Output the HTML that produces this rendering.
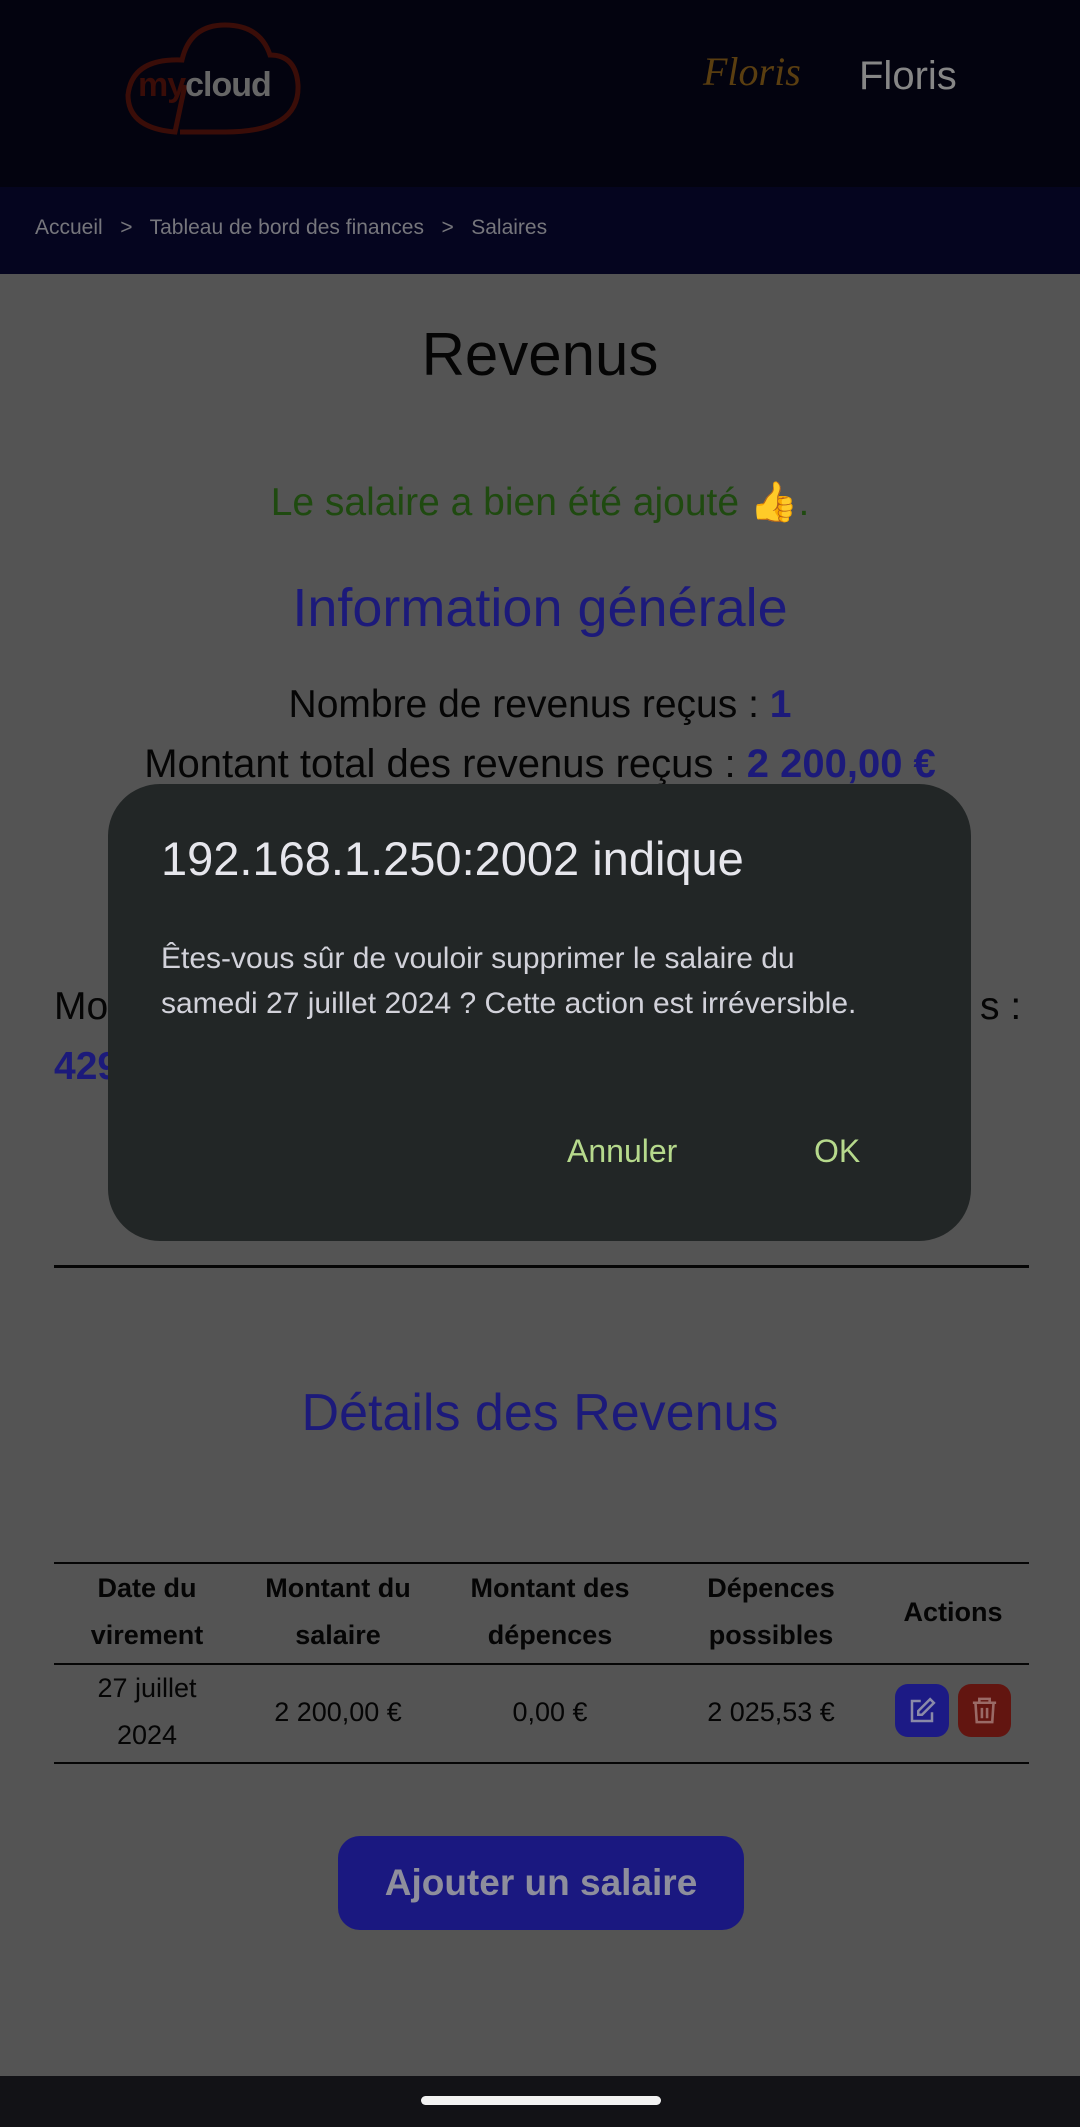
<!DOCTYPE html>
<html><head><meta charset="utf-8"><style>
*{margin:0;padding:0;box-sizing:border-box}
body{width:1080px;height:2127px;background:#545454;font-family:"Liberation Sans",sans-serif;position:relative;overflow:hidden}
.a{position:absolute}
.c{position:absolute;left:0;width:1080px;text-align:center;white-space:nowrap}
.th{position:absolute;text-align:center;font-weight:bold;font-size:27px;line-height:47px;color:#050505;width:200px}
.td{position:absolute;text-align:center;font-size:27px;line-height:47px;color:#050505;width:200px}
</style></head><body>
<div class="a" style="left:0;top:0;width:1080px;height:187px;background:#03030f"></div>
<svg class="a" style="left:120px;top:20px" width="190" height="120" viewBox="0 0 190 120">
<path d="M60 112 L105 112 Q180 112 178 65 Q176 35 150 35 Q140 5 105 5 Q70 5 62 40 Q12 38 8 75 Q8 108 55 112 L65 65" fill="none" stroke="#3a0d08" stroke-width="5"/>
</svg>
<div class="a" style="left:138px;top:66px;font-size:34px;font-weight:bold;letter-spacing:-1px"><span style="color:#3a0d08">my</span><span style="color:#666">cloud</span></div>
<div class="a" style="left:703px;top:48px;font-family:'Liberation Serif',serif;font-style:italic;font-size:40px;color:#5a3e10">Floris</div>
<div class="a" style="left:859px;top:54px;font-size:40px;color:#868686">Floris</div>
<div class="a" style="left:0;top:187px;width:1080px;height:87px;background:#05051f"></div>
<div class="a" style="left:35px;top:216px;font-size:21px;color:#76767c">Accueil &nbsp;&nbsp;&gt;&nbsp;&nbsp; Tableau de bord des finances &nbsp;&nbsp;&gt;&nbsp;&nbsp; Salaires</div>
<div class="c" style="top:320px;font-size:60px;color:#050505">Revenus</div>
<div class="c" style="top:479px;font-size:39px;color:#1f4a10">Le salaire a bien été ajouté <span style="color:#7a5518">👍</span>.</div>
<div class="c" style="top:577px;font-size:54px;color:#1c1a7a">Information générale</div>
<div class="c" style="top:683px;font-size:39px;color:#050505">Nombre de revenus reçus : <b style="color:#1c1a7a">1</b></div>
<div class="c" style="top:742px;font-size:40px;color:#050505">Montant total des revenus reçus : <b style="color:#1c1a7a">2 200,00 €</b></div>
<div class="a" style="left:54px;top:985px;font-size:39px;color:#050505">Mo</div>
<div class="a" style="left:980px;top:985px;font-size:39px;color:#050505">s :</div>
<div class="a" style="left:54px;top:1045px;font-size:39px;font-weight:bold;color:#1c1a7a">429</div>
<div class="a" style="left:54px;top:1265px;width:975px;height:3px;background:#050505"></div>
<div class="c" style="top:1383px;font-size:52px;color:#1c1a7a">Détails des Revenus</div>
<div class="a" style="left:54px;top:1562px;width:975px;height:2px;background:#050505"></div>
<div class="a" style="left:54px;top:1663px;width:975px;height:2px;background:#050505"></div>
<div class="a" style="left:54px;top:1762px;width:975px;height:2px;background:#050505"></div>
<div class="th" style="left:47px;top:1565px">Date du<br>virement</div>
<div class="th" style="left:238px;top:1565px">Montant du<br>salaire</div>
<div class="th" style="left:450px;top:1565px">Montant des<br>dépences</div>
<div class="th" style="left:671px;top:1565px">Dépences<br>possibles</div>
<div class="th" style="left:853px;top:1589px">Actions</div>
<div class="td" style="left:47px;top:1665px">27 juillet<br>2024</div>
<div class="td" style="left:238px;top:1689px">2 200,00 €</div>
<div class="td" style="left:450px;top:1689px">0,00 €</div>
<div class="td" style="left:671px;top:1689px">2 025,53 €</div>
<div class="a" style="left:895px;top:1684px;width:54px;height:53px;border-radius:13px;background:#1c1a85"></div>
<svg class="a" style="left:907px;top:1696px" width="30" height="30" viewBox="0 0 24 24" fill="none" stroke="#8a8aa8" stroke-width="2"><path d="M11 4H4v16h16v-7"/><path d="M18.5 2.5l3 3L12 15H9v-3z"/></svg>
<div class="a" style="left:958px;top:1684px;width:53px;height:53px;border-radius:13px;background:#621510"></div>
<svg class="a" style="left:969px;top:1695px" width="31" height="31" viewBox="0 0 24 24" fill="none" stroke="#9a6a66" stroke-width="2"><path d="M3 6h18M8 6V3h8v3M5 6l1 15h12l1-15M10 10v8M14 10v8"/></svg>
<div class="a" style="left:338px;top:1836px;width:406px;height:94px;border-radius:22px;background:#1a1880;color:#8e8e9c;font-size:37px;font-weight:bold;text-align:center;line-height:94px">Ajouter un salaire</div>
<div class="a" style="left:108px;top:784px;width:863px;height:457px;border-radius:52px;background:#222626"></div>
<div class="a" style="left:161px;top:831px;font-size:47px;color:#e6e6ec">192.168.1.250:2002 indique</div>
<div class="a" style="left:161px;top:936px;font-size:30px;line-height:45px;color:#d2d2da">Êtes-vous sûr de vouloir supprimer le salaire du<br>samedi 27 juillet 2024 ? Cette action est irréversible.</div>
<div class="a" style="left:567px;top:1133px;font-size:32px;color:#b6d98c">Annuler</div>
<div class="a" style="left:814px;top:1133px;font-size:32px;color:#b6d98c">OK</div>
<div class="a" style="left:0;top:2076px;width:1080px;height:51px;background:#121216"></div>
<div class="a" style="left:421px;top:2096px;width:240px;height:9px;border-radius:5px;background:#f2f2f2"></div>
</body></html>
